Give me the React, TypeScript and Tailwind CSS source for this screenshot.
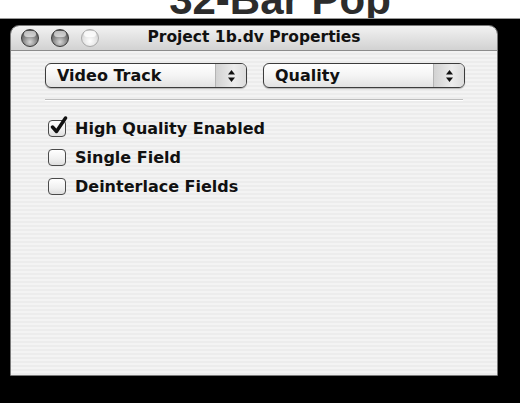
import React from 'react';

// Aqua-style graphite window controls
function Light({ dim }: { dim?: boolean }) {
  return (
    <div
      className={
        dim
          ? 'w-[18px] h-[18px] rounded-full border border-[#a8a8a8] bg-[radial-gradient(circle_at_50%_70%,#ffffff_0%,#e6e6e6_45%,#c4c4c4_100%)]'
          : 'w-[18px] h-[18px] rounded-full border border-[#3a3a3a] bg-[radial-gradient(circle_at_50%_75%,#d8d8d8_0%,#8a8a8a_45%,#3e3e3e_100%)]'
      }
    >
      <div
        className={
          dim
            ? 'mx-auto mt-[1px] w-[12px] h-[6px] rounded-full bg-white/80'
            : 'mx-auto mt-[1px] w-[12px] h-[6px] rounded-full bg-white/60'
        }
      />
    </div>
  );
}

function Popup({ label }: { label: string }) {
  return (
    <div className="flex w-[202px] h-[25px] rounded-[6px] border border-[#3c3c3c] bg-[linear-gradient(#ffffff,#f4f4f4_50%,#e2e2e2)] shadow-[0_1px_1px_rgba(0,0,0,0.25)] overflow-hidden">
      <div className="flex-1 flex items-center pl-[11px] text-[16px] font-bold text-[#111]">
        {label}
      </div>
      <div className="w-[31px] flex items-center justify-center bg-[linear-gradient(90deg,#d2d2d2,#ececec_60%,#dcdcdc)] border-l border-[#b4b4b4]">
        <svg width="9" height="14" viewBox="0 0 9 14">
          <path d="M4.5 1 L8 5.5 H1 Z" fill="#111" />
          <path d="M4.5 13 L8 8.5 H1 Z" fill="#111" />
        </svg>
      </div>
    </div>
  );
}

function Check({ label, checked }: { label: string; checked?: boolean }) {
  return (
    <div className="flex items-center gap-[9px] h-[29px]">
      <div className="relative w-[18px] h-[17px] rounded-[4px] border border-[#4a4a4a] bg-[linear-gradient(#ffffff,#f0f0f0_60%,#dedede)]">
        {checked && (
          <svg className="absolute -top-[5px] left-[1px]" width="18" height="20" viewBox="0 0 18 20">
            <path d="M2.5 11 L6.5 15.5 L15.5 2" fill="none" stroke="#111" strokeWidth="3.4" strokeLinecap="round" strokeLinejoin="round" />
          </svg>
        )}
      </div>
      <span className="text-[16px] font-bold text-[#111]">{label}</span>
    </div>
  );
}

export default function App() {
  return (
    <div className="w-[520px] h-[403px] bg-black overflow-hidden flex flex-col font-['DejaVu_Sans',sans-serif]">
      <div className="h-[19px] bg-white border-b border-[#9a9a9a] overflow-hidden flex justify-center">
        <div className="pl-[40px] -mt-[21px] text-[42px] leading-none font-bold text-[#2c2c2c] font-['Liberation_Sans',sans-serif] whitespace-nowrap">
          “32-Bar Pop”
        </div>
      </div>

      <div className="pt-[6px] pl-[10px]">
        <div className="w-[488px] h-[351px] flex flex-col rounded-t-[9px] border border-[#7a7a7a] overflow-hidden">
          <div className="relative h-[25px] flex items-center justify-center bg-[linear-gradient(#f2f2f2,#e2e2e2_50%,#d2d2d2)] border-b border-[#8c8c8c]">
            <div className="absolute left-[10px] top-[3px] flex gap-[12px]">
              <Light />
              <Light />
              <Light dim />
            </div>
            <span className="text-[15.5px] font-bold text-[#111]">Project 1b.dv Properties</span>
          </div>

          <div className="flex-1 bg-[#f1f1f1] bg-[repeating-linear-gradient(#f3f3f3_0px,#f3f3f3_2px,#ececec_2px,#ececec_4px)] pl-[34px] pt-[12px]">
            <div className="flex gap-[16px]">
              <Popup label="Video Track" />
              <Popup label="Quality" />
            </div>
            <div className="mt-[11px] w-[418px] h-[2px] border-t border-[#bdbdbd] border-b-white border-b" />
            <div className="mt-[13px] pl-[3px] flex flex-col">
              <Check label="High Quality Enabled" checked />
              <Check label="Single Field" />
              <Check label="Deinterlace Fields" />
            </div>
          </div>
        </div>
      </div>
    </div>
  );
}
